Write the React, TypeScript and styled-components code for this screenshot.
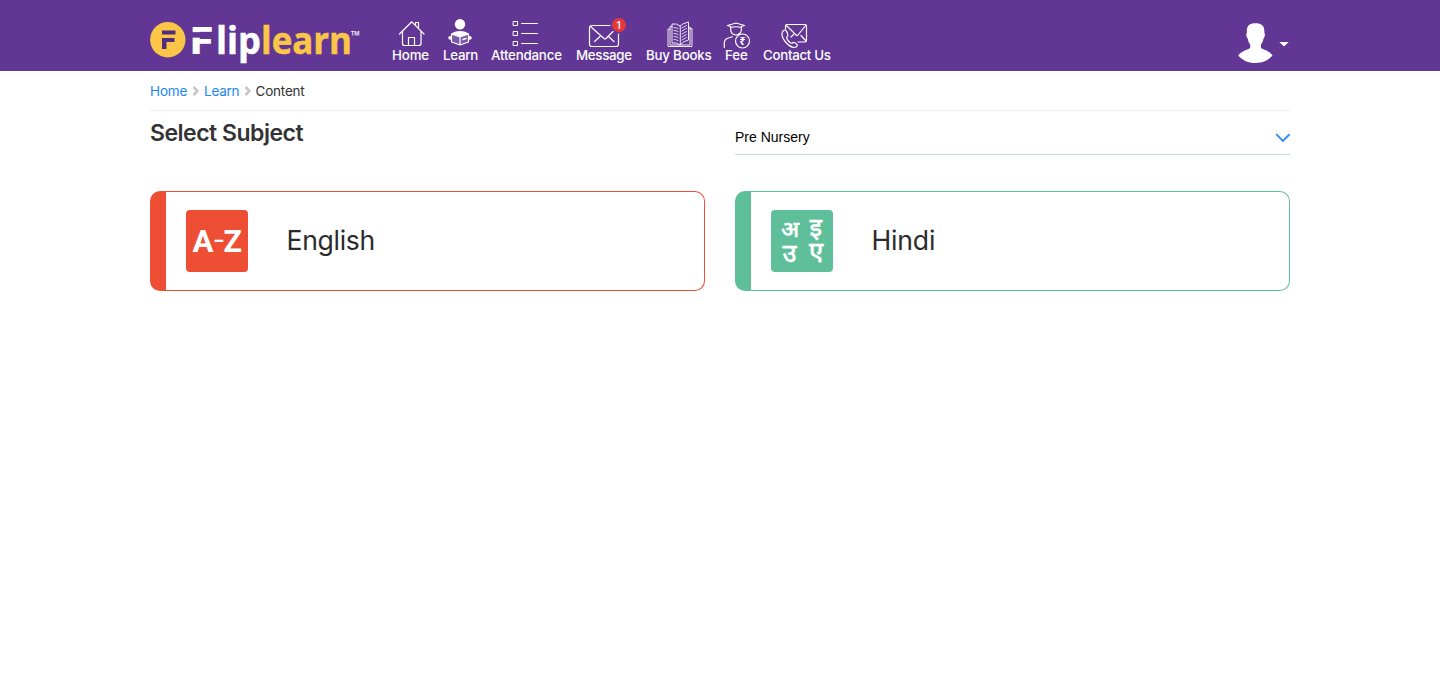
import React from "react";
import styled, { createGlobalStyle } from "styled-components";

const Global = createGlobalStyle`
  * { box-sizing: border-box; }
  body { margin: 0; background: #fff; color: #333; font-family: Inter, Lato, sans-serif; }
`;
const Header = styled.header`
  height: 71px;
  background: #613694;
`;
const Container = styled.div`
  width: 1140px;
  margin: 0 auto;
`;
const Bar = styled(Container)`
  display: flex;
  align-items: flex-start;
`;
const LogoSvg = styled.svg`
  display: block;
  width: 212px;
  height: 71px;
  margin-right: 30px;
`;
const Nav = styled.nav`
  display: flex;
  gap: 14px;
  padding-top: 17px;
`;
const NavItem = styled.a<{ $w: number }>`
  width: ${(p) => p.$w}px;
  color: #fff;
  display: flex;
  flex-direction: column;
`;
const NavIcon = styled.svg`
  display: block;
  width: 100%;
  height: 30px;
  overflow: visible;
  fill: none;
  stroke: #fff;
  stroke-width: 1.2;
  stroke-linejoin: round;
  stroke-linecap: round;
`;
const NavLabel = styled.span<{ $ls: number }>`
  font-size: 13.3px;
  line-height: 16px;
  font-weight: 500;
  white-space: nowrap;
  letter-spacing: ${(p) => p.$ls}px;
`;
const Profile = styled.div`
  margin-left: auto;
  padding: 22px 1px 0 0;
  display: flex;
  gap: 6px;
  svg { display: block; }
`;
const Crumbs = styled.div`
  height: 40px;
  border-bottom: 1px solid #eee;
  display: flex;
  align-items: center;
  font-size: 13.5px;
  line-height: 20px;
`;
const Crumb = styled.span<{ $w: number; $ls: number; $link?: boolean }>`
  width: ${(p) => p.$w}px;
  white-space: nowrap;
  letter-spacing: ${(p) => p.$ls}px;
  color: ${(p) => (p.$link ? "#1b87f3" : "#333")};
`;
const Arrow = styled.svg`
  width: 7px;
  height: 10px;
  margin: 1px 5px 0;
`;
const TitleRow = styled.div`
  display: grid;
  grid-template-columns: 555px 555px;
  gap: 30px;
  height: 44px;
`;
const Title = styled.h1`
  margin: 0;
  padding-top: 7px;
  font-size: 23px;
  line-height: 30px;
  font-weight: 600;
  letter-spacing: -0.5px;
`;
const Select = styled.div`
  display: flex;
  justify-content: space-between;
  align-items: center;
  padding-top: 9px;
  border-bottom: 1px solid #c5dbe6;
  color: #000;
  font: 14px "Liberation Sans", Arial, sans-serif;
  svg { margin-top: 2px; }
`;
const Cards = styled.div`
  display: grid;
  grid-template-columns: 555px 555px;
  gap: 30px;
  padding-top: 36px;
`;
const Card = styled.div<{ $c: string }>`
  height: 100px;
  border: 1px solid ${(p) => p.$c};
  border-left-width: 16px;
  border-radius: 10px;
  display: flex;
  align-items: center;
  padding-left: 20px;
`;
const Tile = styled.div<{ $c: string }>`
  width: 62px;
  height: 62px;
  border-radius: 4px;
  background: ${(p) => p.$c};
  margin-right: 38.5px;
  svg { display: block; }
`;
const Subject = styled.span<{ $ls: number }>`
  font-size: 26.6px;
  line-height: 34px;
  padding-bottom: 2px;
  color: #2b2b2b;
  letter-spacing: ${(p) => p.$ls}px;
`;

const Logo = () => (
  <LogoSvg viewBox="0 0 212 71">
    <circle cx="17.8" cy="39.7" r="17.7" fill="#fbc647" />
    <path d="M12 30.500h13.500v4H12zM12 38h12.500v4h-8v7H12z" fill="#512d7d" />
    <g fontFamily="Open Sans" fontWeight="700" fontSize="37">
      <text x="38.500" y="53.700" fill="#fff" textLength="25.500" lengthAdjust="spacingAndGlyphs">F</text>
      <text x="66" y="53.700" fill="#fff" stroke="#fff" strokeWidth=".5" textLength="45" lengthAdjust="spacingAndGlyphs">lip</text>
      <text x="111" y="53.700" fill="#fbc647" stroke="#fbc647" strokeWidth=".5" textLength="91" lengthAdjust="spacingAndGlyphs">learn</text>
      <text x="201" y="40" fill="#fff" fontSize="13" textLength="9" lengthAdjust="spacingAndGlyphs">™</text>
    </g>
    <path d="M38 34.900h27" stroke="#613694" strokeWidth="5.500" />
  </LogoSvg>
);

const HomeIcon = () => (
  <NavIcon>
    <path d="M7.500 17 19.800 4.800 32 17M10.500 14.500v12q0 2 2 2h14q2.500 0 2.500-2v-12M16.500 28.500v-8h6v8M23.500 8V5.500h3v6" />
  </NavIcon>
);
const LearnIcon = () => (
  <NavIcon>
    <circle cx="17" cy="7.200" r="5.200" fill="#fff" stroke="none" />
    <path d="M8 17q3-3 9-3t9 3l-9 4z" fill="#fff" stroke="none" />
    <path d="M8.500 17 17 20V28L8.500 25zM25.500 17 17 20V28l8.500-3z" fill="#7d58a8" />
    <path d="m20 22.500 3-1" strokeWidth="1.500" />
    <circle cx="7.200" cy="20.800" r="1.900" fill="#fff" stroke="none" />
    <circle cx="26.800" cy="20.800" r="1.900" fill="#fff" stroke="none" />
  </NavIcon>
);
const AttendanceIcon = () => (
  <NavIcon>
    {[6.5, 16.5, 26.5].map((y) => (
      <g key={y} strokeWidth="1">
        <rect x="22.500" y={y - 2} width="4" height="4" />
        <path d={`M30.500 ${y}H46.500`} />
      </g>
    ))}
  </NavIcon>
);
const MessageIcon = () => (
  <NavIcon>
    <path d="M34 8.500H16q-2.500 0-2.500 2.500v16q0 2.500 2.500 2.500h24q2.500 0 2.500-2.500V17M14.500 9.500 28 21.500q1 .8 2 0L37 14.500M18.500 24.500l5.500-5M32.500 19.500l5.500 5" />
    <circle cx="43" cy="8" r="7" fill="#e5383b" stroke="none" />
    <text x="43" y="11.800" textAnchor="middle" fontFamily="Roboto" fontSize="10.500" fill="#fff" stroke="none" fontWeight="500">1</text>
  </NavIcon>
);
const BooksIcon = () => (
  <NavIcon>
    <g strokeWidth="0.9">
      <path d="M34 9q-3-3-8-2v19q5-1 8 2zM34 9q2-2.500 8.500-4v18q-5 1-8.500 5M26 9.500h-2V28h9M24 12h-2v17.500h24V11.500h-2M42.500 10h1.500v18h-9" />
      <path d="M28 10.500q2 0 4 1M28 13.500q2 0 4 1M28 16.500q2 0 4 1M28 19.500q2 0 4 1M28 22.500q2 0 4 1M36 11l4.500-2.500M36 14l4.500-2.500M36 17l4.500-2.500M36 20l4.500-2.500M36 23l4.500-2.500" strokeWidth=".8" />
    </g>
  </NavIcon>
);
const FeeIcon = () => (
  <NavIcon>
    <path d="M2.500 8.500 11 6l8.500 2.500-3.200 1v4M2.500 8.500l3.200 1v3q0 5 5.300 5.500 4-.5 5-3.500M5.700 10.500q5.300-1.500 10.600 0M-.7 30.500v-4q0-4.500 4-5.500l4-1.200" />
    <circle cx="17.500" cy="24" r="7" />
    <text x="17.500" y="27.800" textAnchor="middle" fontFamily="Noto Sans" fontSize="10.500" fill="#fff" stroke="none" fontWeight="700">₹</text>
  </NavIcon>
);
const ContactIcon = () => (
  <NavIcon>
    <path d="M22.500 12V9q0-1.500 1.500-1.500h18q1.500 0 1.500 1.500v14q0 2-2 2H35M23 8l10 10q1 1 2 0L43 8M38 18.500l4.500 5M30.500 17.500 28 20" />
    <path d="M20.500 13.500q-1.500 1-1.500 3.500 0 4 4 8.500t8 5q2.500 0 3.500-2 0-1-3-3-1.500-.5-2.500 1-1.500 0-4-3-1.500-2-1.200-3.500 1.500-1 1-2.500-.8-3-1.800-4-1.200-1-2.500 0z" />
  </NavIcon>
);

const items = [
  { label: "Home", w: 37, ls: -0.15, Icon: HomeIcon },
  { label: "Learn", w: 34, ls: -0.25, Icon: LearnIcon },
  { label: "Attendance", w: 71, ls: -0.2, Icon: AttendanceIcon },
  { label: "Message", w: 56, ls: -0.3, Icon: MessageIcon },
  { label: "Buy Books", w: 65, ls: -0.2, Icon: BooksIcon },
  { label: "Fee", w: 24, ls: -0.1, Icon: FeeIcon },
  { label: "Contact Us", w: 68, ls: -0.3, Icon: ContactIcon },
];

const Separator = () => (
  <Arrow viewBox="0 0 7 10">
    <path d="m1.500 1 4 4-4 4" fill="none" stroke="#c8c8c8" strokeWidth="2.600" />
  </Arrow>
);

export default function App() {
  return (
    <>
      <Global />
      <Header>
        <Bar>
          <Logo />
          <Nav>
            {items.map(({ label, w, ls, Icon }) => (
              <NavItem key={label} $w={w}>
                <Icon />
                <NavLabel $ls={ls}>{label}</NavLabel>
              </NavItem>
            ))}
          </Nav>
          <Profile>
            <svg width="36" height="42" viewBox="0 0 36 42">
              <path d="M18.500 1.300c6.500 0 9.300 3 8.800 9.200 1 1 .7 4.500-.8 6-.5 3-1.700 5-2.500 6v3.500c3 2 9 3 11.500 7.500C31.500 38.500 25.500 41 18.500 41S5.500 38.500 1.200 33.500c3-4.500 9-5.500 12-7.500v-3.500c-1-1-2-3-2.500-6-1.500-1.500-1.800-5-.8-6C9.200 4.300 12 1.300 18.500 1.300z" fill="#fff" />
            </svg>
            <svg width="10" height="42" viewBox="0 0 10 42">
              <path d="M.3 20h9.400L5 24.500z" fill="#fff" />
            </svg>
          </Profile>
        </Bar>
      </Header>
      <Container>
        <Crumbs>
          <Crumb $w={37} $ls={-0.15} $link>Home</Crumb>
          <Separator />
          <Crumb $w={34.5} $ls={-0.25} $link>Learn</Crumb>
          <Separator />
          <Crumb $w={50} $ls={-0.2}>Content</Crumb>
        </Crumbs>
        <TitleRow>
          <Title>Select Subject</Title>
          <Select>
            Pre Nursery
            <svg width="16" height="10" viewBox="0 0 16 10">
              <path d="m2.200 1.200 6.700 6.700 6.700-6.700" fill="none" stroke="#2f8ff5" strokeWidth="1.900" />
            </svg>
          </Select>
        </TitleRow>
        <Cards>
          <Card $c="#ee4e34">
            <Tile $c="#ee4e34">
              <svg width="62" height="62" fill="#fff" fontFamily="Roboto" fontWeight="700" fontSize="31">
                <text x="6.500" y="42" textLength="21" lengthAdjust="spacingAndGlyphs">A</text>
                <text x="28" y="40" fontWeight="400" textLength="10" lengthAdjust="spacingAndGlyphs">-</text>
                <text x="37.500" y="42" textLength="18.500" lengthAdjust="spacingAndGlyphs">Z</text>
              </svg>
            </Tile>
            <Subject $ls={-0.33}>English</Subject>
          </Card>
          <Card $c="#60bf9b">
            <Tile $c="#60bf9b">
              <svg width="62" height="62" fill="#fff" stroke="#fff" strokeWidth=".4" fontFamily="Noto Sans, Noto Sans Devanagari, sans-serif" fontWeight="500" fontSize="23">
                <text x="10" y="27">अ</text>
                <text x="38.500" y="25.500" fontSize="25">इ</text>
                <text x="11.500" y="52" fontSize="25">उ</text>
                <text x="38" y="50" fontSize="25">ए</text>
              </svg>
            </Tile>
            <Subject $ls={-0.2}>Hindi</Subject>
          </Card>
        </Cards>
      </Container>
    </>
  );
}
